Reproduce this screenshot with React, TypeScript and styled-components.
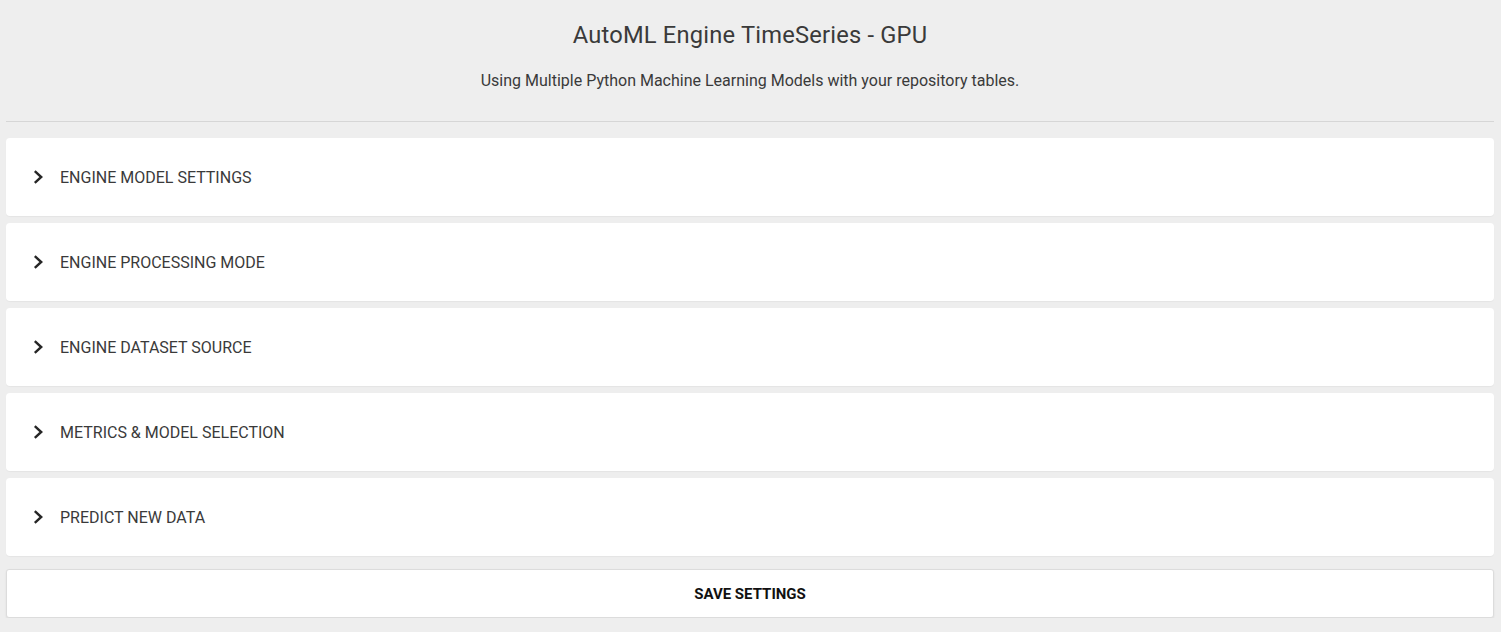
import React from "react";
import styled, { createGlobalStyle } from "styled-components";

const Global = createGlobalStyle`
  html, body { margin: 0; padding: 0; background: #eeeeee; }
  body { font-family: Roboto, "Noto Sans", sans-serif; color: #333; }
`;

const Page = styled.div`
  padding: 0 7px 0 6px;
  display: flex;
  flex-direction: column;
`;

const Header = styled.header`
  display: flex;
  flex-direction: column;
  align-items: center;
  padding-top: 20px;
  padding-bottom: 30px;
  border-bottom: 1px solid #d6d6d6;
  margin-bottom: 16px;
`;

const Title = styled.h1`
  margin: 0;
  font-size: 23.7px;
  font-weight: 400;
  color: #3a3a3a;
  line-height: 30px;
  letter-spacing: 0.2px;
`;

const Subtitle = styled.p`
  margin: 21px 0 0;
  font-size: 16px;
  color: #3a3a3a;
  line-height: 20px;
`;

const List = styled.div`
  display: flex;
  flex-direction: column;
  gap: 7px;
`;

const Panel = styled.div`
  background: #fff;
  border-radius: 4px;
  height: 78px;
  display: flex;
  align-items: center;
  padding-left: 25px;
  box-shadow: 0 1px 1px rgba(0,0,0,0.04);
`;

const Chevron = styled.svg`
  width: 18px;
  height: 18px;
  margin-right: 11px;
  flex: none;
`;

const PanelTitle = styled.span`
  font-size: 16px;
  color: #3a3a3a;
  text-transform: uppercase;
`;

const SaveButton = styled.button`
  margin-top: 13px;
  height: 49px;
  background: #fff;
  border: 1px solid #dcdcdc;
  border-radius: 3px;
  box-shadow: 0 1px 2px rgba(0,0,0,0.08);
  font-family: Roboto, "Noto Sans", sans-serif;
  font-size: 15px;
  font-weight: 700;
  color: #111;
  cursor: pointer;
`;

const sections = [
  "Engine Model Settings",
  "Engine Processing Mode",
  "Engine Dataset Source",
  "Metrics & Model Selection",
  "Predict New Data",
];

export default function App() {
  return (
    <>
      <Global />
      <Page>
        <Header>
          <Title>AutoML Engine TimeSeries - GPU</Title>
          <Subtitle>Using Multiple Python Machine Learning Models with your repository tables.</Subtitle>
        </Header>
        <List>
          {sections.map((s) => (
            <Panel key={s}>
              <Chevron viewBox="0 0 18 18">
                <path d="M3.8 3.2 L10.2 9 L3.8 14.8" fill="none" stroke="#262626" strokeWidth="2.4" />
              </Chevron>
              <PanelTitle>{s}</PanelTitle>
            </Panel>
          ))}
        </List>
        <SaveButton>SAVE SETTINGS</SaveButton>
      </Page>
    </>
  );
}
